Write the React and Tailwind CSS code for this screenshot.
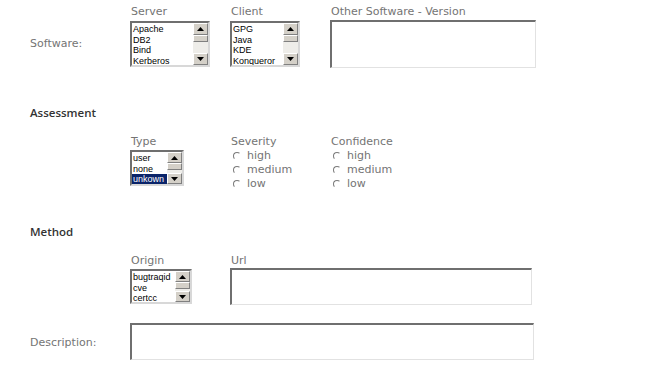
import React from "react";

const labelFont = { fontFamily: '"DejaVu Sans", Verdana, sans-serif' };

function Arrow({ up }) {
  return (
    <svg width="7" height="4" viewBox="0 0 7 4" className="block">
      {up ? <polygon points="0,4 7,4 3.5,0" fill="#000" /> : <polygon points="0,0 7,0 3.5,4" fill="#000" />}
    </svg>
  );
}

function SBtn({ up, h }) {
  return (
    <div
      className="flex items-center justify-center bg-[#d4d0c8] border border-t-white border-l-white border-b-[#808080] border-r-[#808080]"
      style={{ height: h }}
    >
      <Arrow up={up} />
    </div>
  );
}

function ListBox({ w, h, items, selected, btn = 12 }) {
  return (
    <div
      className="flex bg-white border-2 border-t-[#6f6f6f] border-l-[#6f6f6f] border-b-[#d8d8d8] border-r-[#d8d8d8] overflow-hidden"
      style={{ width: w, height: h }}
    >
      <div className="flex-1 pt-[1px] text-[9px] leading-[10.67px] text-black" style={{ fontFamily: '"Liberation Sans", Arial, sans-serif' }}>
        {items.map((it) => (
          <div key={it} className={it === selected ? "bg-[#0a246a] text-white pl-[1px]" : "pl-[1px]"}>
            {it}
          </div>
        ))}
      </div>
      <div className="w-[15px] flex flex-col bg-[#eeede9]">
        <SBtn up h={btn} />
        <div className="h-[7px] bg-[#d4d0c8] border border-t-white border-l-white border-b-[#808080] border-r-[#808080]" />
        <div className="flex-1" />
        <SBtn h={btn} />
      </div>
    </div>
  );
}

function TextBox({ w, h }) {
  return (
    <div
      className="bg-white border border-t-[#6f6f6f] border-l-[#6f6f6f] border-b-[#e2e2e2] border-r-[#e2e2e2] border-l-2 border-t-2"
      style={{ width: w, height: h }}
    />
  );
}

function Radio({ label }) {
  return (
    <div className="flex items-center h-[14px] pl-[3px]">
      <div className="w-[8px] h-[8px] rounded-full border border-t-[#7a7a7a] border-l-[#7a7a7a] border-b-white border-r-white" />
      <span className="ml-[6px] text-[11px] leading-[14px] text-[#747474]">{label}</span>
    </div>
  );
}

function Lbl({ children, cls = "" }) {
  return <div className={"text-[11px] leading-[14px] text-[#747474] " + cls}>{children}</div>;
}

function Heading({ children, cls = "" }) {
  return (
    <div
      className={"text-[11.5px] leading-[14px] font-semibold text-[#333] " + cls}
      style={{ fontFamily: '"Open Sans", "DejaVu Sans", sans-serif' }}
    >
      {children}
    </div>
  );
}

export default function App() {
  return (
    <div className="w-[664px] h-[385px] bg-white pl-[30px] pt-[5px] overflow-hidden" style={labelFont}>
      {/* Software row */}
      <div className="flex">
        <div className="w-[100px] pt-[32px]">
          <Lbl>Software:</Lbl>
        </div>
        <div className="w-[100px]">
          <Lbl cls="pl-[1px]">Server</Lbl>
          <div className="mt-[2px]">
            <ListBox w={80} h={46} items={["Apache", "DB2", "Bind", "Kerberos"]} />
          </div>
        </div>
        <div className="w-[100px]">
          <Lbl cls="pl-[1px]">Client</Lbl>
          <div className="mt-[2px]">
            <ListBox w={70} h={46} items={["GPG", "Java", "KDE", "Konqueror"]} />
          </div>
        </div>
        <div>
          <Lbl cls="pl-[1px]">Other Software - Version</Lbl>
          <div className="mt-[1px]">
            <TextBox w={206} h={48} />
          </div>
        </div>
      </div>

      {/* Assessment */}
      <Heading cls="mt-[38px]">Assessment</Heading>
      <div className="flex mt-[15px]">
        <div className="w-[100px]" />
        <div className="w-[100px]">
          <Lbl cls="pl-[1px]">Type</Lbl>
          <div className="mt-[1px]">
            <ListBox w={54} h={36} items={["user", "none", "unkown"]} selected="unkown" btn={11} />
          </div>
        </div>
        <div className="w-[100px]">
          <Lbl cls="pl-[1px]">Severity</Lbl>
          <Radio label="high" />
          <Radio label="medium" />
          <Radio label="low" />
        </div>
        <div className="w-[100px]">
          <Lbl cls="pl-[1px]">Confidence</Lbl>
          <Radio label="high" />
          <Radio label="medium" />
          <Radio label="low" />
        </div>
      </div>

      {/* Method */}
      <Heading cls="mt-[34px]">Method</Heading>
      <div className="flex mt-[15px]">
        <div className="w-[100px]" />
        <div className="w-[100px]">
          <Lbl cls="pl-[1px]">Origin</Lbl>
          <div className="mt-[1px]">
            <ListBox w={62} h={35} items={["bugtraqid", "cve", "certcc"]} btn={11} />
          </div>
        </div>
        <div>
          <Lbl cls="pl-[1px]">Url</Lbl>
          <TextBox w={302} h={37} />
        </div>
      </div>

      {/* Description */}
      <div className="flex mt-[18px]">
        <div className="w-[100px] pt-[13px]">
          <Lbl>Description:</Lbl>
        </div>
        <TextBox w={404} h={37} />
      </div>
    </div>
  );
}
